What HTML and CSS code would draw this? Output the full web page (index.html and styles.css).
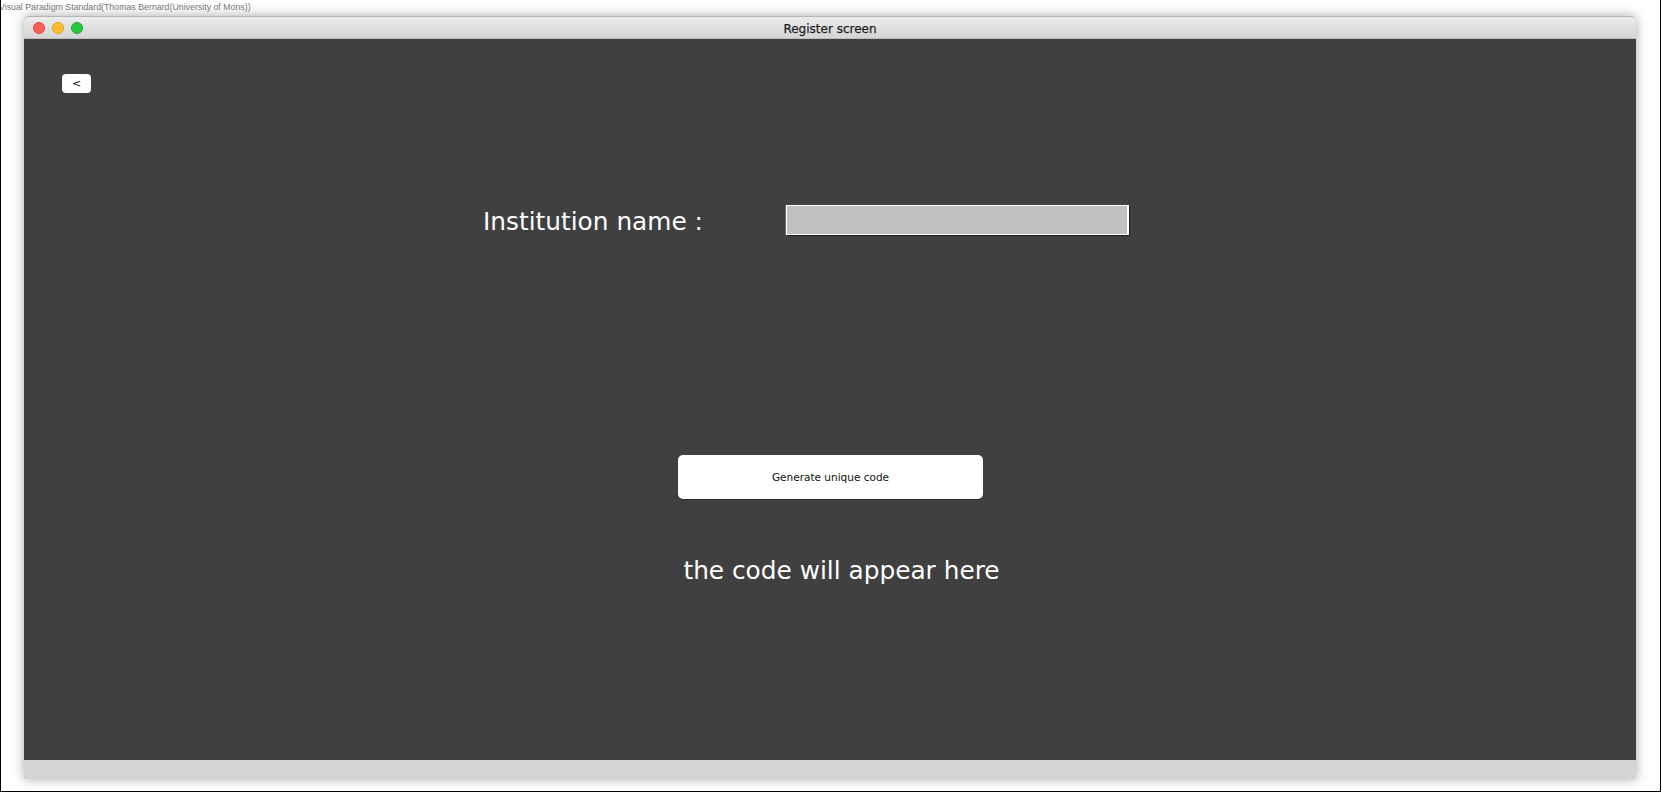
FILE: index.html
```html
<!DOCTYPE html>
<html>
<head>
<meta charset="utf-8">
<link rel="stylesheet" href="styles.css">
<title>Register screen</title>
</head>
<body>
<div class="page">
  <div class="caption">Visual Paradigm Standard(Thomas Bernard(University of Mons))</div>
  <div class="window">
    <div class="titlebar">
      <div class="lights">
        <span class="light red"></span>
        <span class="light yellow"></span>
        <span class="light green"></span>
      </div>
      <div class="title">Register screen</div>
    </div>
    <div class="content">
      <div class="back">&lt;</div>
      <div class="field-row">
        <div class="label">Institution name :</div>
        <div class="input"></div>
      </div>
      <div class="btn-row">
        <div class="generate">Generate unique code</div>
      </div>
      <div class="code">the code will appear here</div>
    </div>
    <div class="bottom"></div>
  </div>
</div>
</body>
</html>
```

FILE: styles.css
```css
html, body {
  margin: 0;
  padding: 0;
  background: #fff;
}
.page {
  width: 1661px;
  height: 792px;
  box-sizing: border-box;
  border-left: 1px solid #000;
  border-right: 1px solid #000;
  border-bottom: 1px solid #000;
  overflow: hidden;
  font-family: "DejaVu Sans", sans-serif;
}
.caption {
  height: 16px;
  margin-left: -2px;
  padding-top: 2px;
  box-sizing: border-box;
  font-family: "Liberation Sans", sans-serif;
  font-size: 8.8px;
  line-height: 10px;
  color: #777;
  white-space: nowrap;
}
.window {
  margin-left: 23px;
  width: 1612px;
  box-shadow: 0 0 12px rgba(0,0,0,0.35);
  border-radius: 5px 5px 0 0;
}
.titlebar {
  height: 23px;
  box-sizing: border-box;
  border-top: 1px solid #b4b4b4;
  border-bottom: 1px solid #bdbdbd;
  border-radius: 5px 5px 0 0;
  background: linear-gradient(#ececec, #d4d4d4);
  display: flex;
  align-items: center;
  justify-content: center;
  position: relative;
}
.lights {
  position: absolute;
  left: 9px;
  top: 5px;
  display: flex;
  gap: 7px;
}
.light {
  width: 12px;
  height: 12px;
  border-radius: 50%;
  box-sizing: border-box;
}
.red { background: #fc5f57; border: 1px solid #e0443e; }
.yellow { background: #fdbc2e; border: 1px solid #dea123; }
.green { background: #28c840; border: 1px solid #1aab29; }
.title {
  font-size: 12px;
  color: #1e1e1e;
  -webkit-text-stroke: 0.25px #1e1e1e;
  line-height: 20px;
  padding-top: 2px;
}
.content {
  height: 721px;
  background: #404040;
  box-sizing: border-box;
  padding-top: 35px;
  display: flex;
  flex-direction: column;
}
.back {
  margin-left: 38px;
  width: 29px;
  height: 19px;
  background: #fff;
  border-radius: 4px;
  font-size: 11px;
  line-height: 19px;
  text-align: center;
  color: #111;
}
.field-row {
  margin-top: 112px;
  margin-left: 459px;
  display: flex;
  align-items: center;
  height: 30px;
}
.label {
  width: 303px;
  font-size: 24.8px;
  color: #fff;
  white-space: nowrap;
  line-height: 30px;
  position: relative;
  top: 2px;
}
.input {
  width: 343px;
  height: 30px;
  box-sizing: border-box;
  background: #c0c0c0;
  border: 1px solid #fff;
  border-right-width: 2px;
  box-shadow: -1px 0 0 #6a6a6a, 1px 1px 1px rgba(0,0,0,0.45);
}
.btn-row {
  margin-top: 220px;
  display: flex;
  justify-content: center;
  padding-left: 1px;
}
.generate {
  width: 305px;
  height: 44px;
  background: #fff;
  border-radius: 5px;
  font-size: 10.5px;
  line-height: 44px;
  text-align: center;
  color: #111;
  box-shadow: 0 1px 1px rgba(0,0,0,0.3);
}
.code {
  margin-top: 57px;
  padding-left: 23px;
  text-align: center;
  font-size: 24.8px;
  line-height: 30px;
  color: #fff;
}
.bottom {
  height: 19px;
  background: #d4d4d4;
}
```
